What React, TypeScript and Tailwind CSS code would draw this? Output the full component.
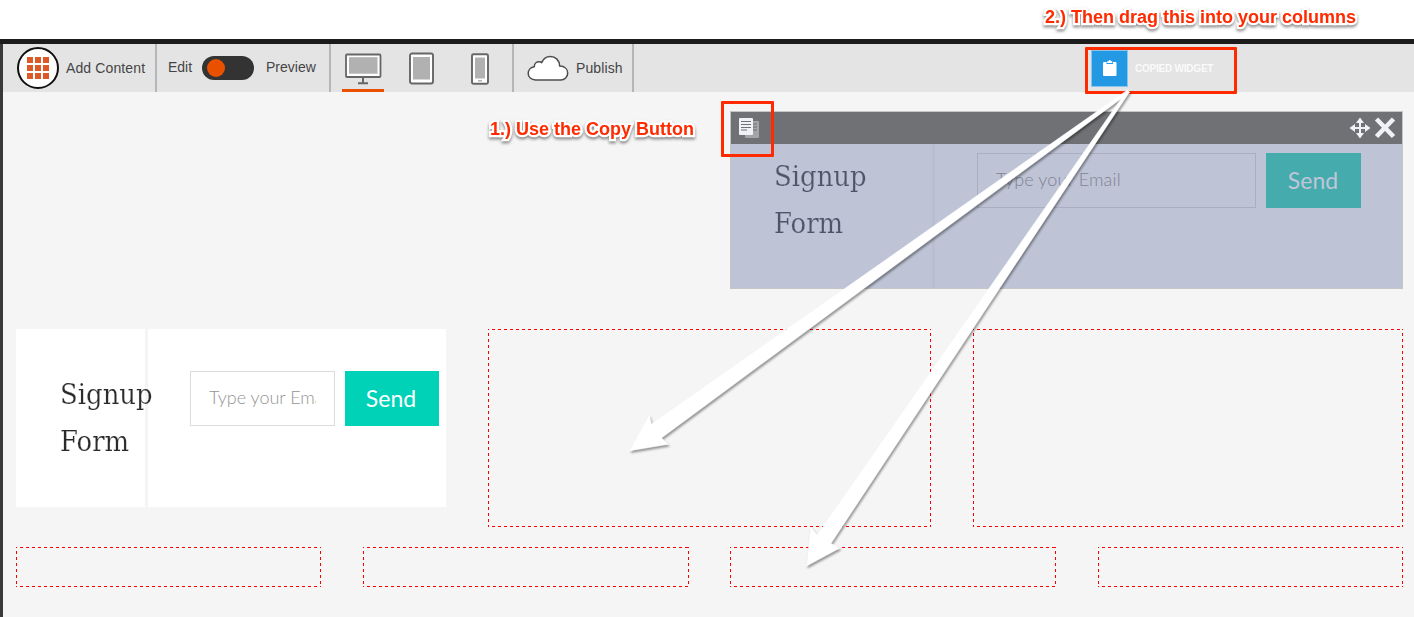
import type { ReactNode } from "react";

const sans = "font-['Liberation_Sans',sans-serif]";

function Monitor() {
  return (
    <svg width="38" height="34" viewBox="0 0 38 34" className="block">
      <rect x="2" y="2.500" width="34.500" height="22.500" rx="1" fill="#fff" stroke="#666" strokeWidth="1.800" />
      <rect x="5" y="5.200" width="28.500" height="16.500" fill="#b1b1b1" />
      <path d="M19 25v6M14 31.300h10" stroke="#666" strokeWidth="2" fill="none" />
    </svg>
  );
}

function Tablet() {
  return (
    <svg width="26" height="34" viewBox="0 0 26 34" className="block">
      <rect x="1" y="1.500" width="23" height="30" rx="2" fill="#fff" stroke="#666" strokeWidth="1.900" />
      <rect x="4" y="5" width="17" height="22.500" fill="#b1b1b1" />
    </svg>
  );
}

function Phone() {
  return (
    <svg width="19" height="34" viewBox="0 0 19 34" className="block">
      <rect x="1" y="2.200" width="16" height="29.500" rx="1.500" fill="#fff" stroke="#666" strokeWidth="1.900" />
      <rect x="4" y="5.500" width="10" height="21" fill="#b1b1b1" />
      <rect x="7" y="28" width="4" height="1.500" fill="#b1b1b1" />
    </svg>
  );
}

function Cloud() {
  return (
    <svg width="42" height="27" viewBox="0 0 42 27" className="block">
      <path
        d="M8.500 25C4.200 25 1.200 22 1.200 18.400C1.200 15 3.700 12.200 7.300 11.700C7.300 8.500 9.600 6.800 12 6.800C13.100 6.800 13.900 7 14.700 7.600C16.200 3.800 19.400 1.500 23.300 1.500C28.600 1.500 32.500 5.300 32.700 11.100C37.800 11.200 40.700 14.300 40.700 18.100C40.700 22 37.700 25 33.700 25Z"
        fill="#fff"
        stroke="#4d4d4d"
        strokeWidth="1.500"
        strokeLinejoin="round"
      />
    </svg>
  );
}

function Toolbar() {
  return (
    <header className={`flex h-12 bg-[#e4e4e4] text-[14px] leading-none text-[#444] ${sans}`}>
      <div className="flex w-[154px] items-center border-r-2 border-[#b4b7ba] pl-3.5">
        <div className="grid h-[42px] w-[42px] shrink-0 place-content-center grid-cols-[repeat(3,6px)] gap-0.5 rounded-full border-2 border-[#111] bg-white">
          {Array.from({ length: 9 }, (_, i) => (
            <span key={i} className="h-1.5 w-1.5 bg-[#dc5a28]" />
          ))}
        </div>
        <span className="ml-[7px] whitespace-nowrap tracking-[0.12px]">Add Content</span>
      </div>
      <div className="flex w-[174px] items-center border-r-2 border-[#b4b7ba] pl-[11px]">
        <span className="w-[34px] -mt-0.5">Edit</span>
        <span className="flex h-6 w-[52px] items-center rounded-full bg-[#333] pl-[5px]">
          <span className="h-[18px] w-[18px] rounded-full bg-[#e95000]" />
        </span>
        <span className="ml-3 -mt-0.5">Preview</span>
      </div>
      <div className="flex w-[183px] border-r-2 border-[#b4b7ba] pl-[11px]">
        <div className="flex h-12 w-[42px] flex-col items-center border-b-3 border-[#e95000] pt-2">
          <Monitor />
        </div>
        <div className="ml-[25px] pt-2">
          <Tablet />
        </div>
        <div className="ml-9 pt-2">
          <Phone />
        </div>
      </div>
      <div className="flex w-[120px] items-center border-r-2 border-[#b4b7ba] pl-[13px]">
        <Cloud />
        <span className="ml-[7px] tracking-[0.1px]">Publish</span>
      </div>
      <div className="ml-[457px] mt-1.5 flex h-[37px] items-center">
        <span className="grid h-[37px] w-[37px] place-content-center border border-[#8bc5ec] bg-[#2499e3]">
          <svg width="16" height="18" viewBox="0 0 16 18" className="-mt-0.5 block">
            <path d="M2 3h2.500v2h6.500V3H13.500q1 0 1 1v12q0 1-1 1H2q-1 0-1-1V4q0-1 1-1Z" fill="#fff" />
            <path d="M5.200 2.200H6.700a1.100 1.100 0 0 1 2.200 0h1.400V4h-5.100Z" fill="#fff" />
          </svg>
        </span>
        <span className="ml-[7px] whitespace-nowrap text-[10px] font-bold tracking-[-0.22px] text-[#fafafa]">COPIED WIDGET</span>
      </div>
    </header>
  );
}

function Title({ dim }: { dim?: boolean }) {
  return (
    <h2
      className={`-ml-px origin-left scale-x-[0.96] font-['DejaVu_Serif',serif] text-[27px] leading-[47px] ${
        dim
          ? "text-[#4d5567] [-webkit-text-stroke:0.2px_#bec4d6]"
          : "text-[#2b2b2e] [-webkit-text-stroke:0.2px_#fff]"
      }`}
    >
      Signup
      <br />
      Form
    </h2>
  );
}

function CopiedSource() {
  return (
    <section className="ml-auto h-[178px] w-[673px] border border-[#c4c5c8] bg-[#bec4d6]">
      <div className="flex h-8 items-center bg-[#707175]">
        <svg width="22" height="22" viewBox="0 0 22 22" className="ml-[7px]">
          <rect x="7" y="4" width="14" height="17" rx="1" fill="#a3a4a8" />
          <path d="M14 7h5M14 10h5M14 13h5" stroke="#707175" strokeWidth="1.200" />
          <rect x="1" y="1" width="14" height="17" rx="1" fill="#f0f1f6" />
          <path d="M3 4.500h10M3 7.500h10M3 10.500h10M3 13h6" stroke="#707175" strokeWidth="1.200" />
        </svg>
        <svg width="22" height="22" viewBox="0 0 22 22" className="ml-auto" fill="#f0f1f6">
          <path d="M11 0.500l4 5.500H12v4h4V7L21.500 11l-5.500 4v-3h-4v4h3L11 21.500l-4-5.500h3v-4H6v3L0.500 11l5.500-4v3h4V6H7Z" />
        </svg>
        <svg width="22" height="22" viewBox="0 0 22 22" className="ml-[3px] mr-1.5">
          <path d="M2.500 2l17 17.500M19.500 2l-17 17.500" stroke="#f0f1f6" strokeWidth="4.600" />
        </svg>
      </div>
      <div className="flex h-36">
        <div className="w-[204px] border-r-3 border-[#b9bfd1] pl-11 pt-[9px]">
          <Title dim />
        </div>
        <div className="flex pl-[42px] pt-[9px] font-[Lato,sans-serif]">
          <div className="h-[55px] w-[279px] border border-[#a9aec0] pl-[18px] text-[18px] font-light leading-[51px] tracking-[0.15px] text-[#7f8394]">
            Type your Email
          </div>
          <div className="ml-2.5 h-[55px] w-[95px] bg-[#45abad] pr-px text-center text-[23px] leading-[55px] text-[#c0c5d8]">
            Send
          </div>
        </div>
      </div>
    </section>
  );
}

function PastedWidget() {
  return (
    <section className="flex h-[178px] w-[430px] bg-white">
      <div className="w-[132px] shrink-0 border-r-3 border-[#f5f5f5] pl-[45px] pt-[42px]">
        <Title />
      </div>
      <div className="flex pl-[42px] pt-[42px] font-[Lato,sans-serif]">
        <div className="h-[55px] w-[145px] border border-[#dcdcdc] px-[18px] text-[18px] font-light leading-[51px] text-[#949494]">
          <div className="overflow-hidden whitespace-nowrap">Type your Email</div>
        </div>
        <div className="ml-2.5 h-[55px] w-[94px] bg-[#00d2b8] pr-0.5 text-center text-[23px] leading-[55px] text-white">
          Send
        </div>
      </div>
    </section>
  );
}

function DropZone({ className }: { className: string }) {
  return (
    <div className={className}>
      <svg width="100%" height="100%" className="block" fill="none" stroke="#f00" strokeDasharray="3 3" shapeRendering="crispEdges">
        <line x1="0" y1="0.5" x2="100%" y2="0.5" strokeDashoffset="2" />
        <line x1="0" y1="100%" x2="100%" y2="100%" strokeDashoffset="2" strokeWidth="2" />
        <line x1="0.5" y1="0" x2="0.5" y2="100%" strokeDashoffset="2" />
        <line x1="100%" y1="0" x2="100%" y2="100%" strokeDashoffset="2" strokeWidth="2" />
      </svg>
    </div>
  );
}

function Callout({ className, children }: { className: string; children: ReactNode }) {
  return (
    <p
      className={`absolute whitespace-nowrap text-[18px] font-bold leading-5 text-[#ff2a00] [paint-order:stroke_fill] [-webkit-text-stroke:4.5px_#fff] [filter:drop-shadow(0_2px_1.5px_rgba(0,0,0,0.45))] ${sans} ${className}`}
    >
      {children}
    </p>
  );
}

export default function App() {
  return (
    <div className="relative h-[617px] w-[1414px] overflow-hidden bg-white pt-[39px]">
      <div className="h-[5px] bg-[#1c1c1c]" />
      <div className="h-[573px] border-l-3 border-[#393939] bg-[#f5f5f5]">
        <Toolbar />
        <main className="pl-[13px] pr-[11px] pt-[19px]">
          <CopiedSource />
          <div className="mt-10 flex">
            <PastedWidget />
            <DropZone className="ml-[42px] h-[198px] w-[443px]" />
            <DropZone className="ml-[42px] h-[198px] w-[430px]" />
          </div>
          <div className="mt-5 flex">
            <DropZone className="h-10 w-[305px]" />
            <DropZone className="ml-[42px] h-10 w-[326px]" />
            <DropZone className="ml-[41px] h-10 w-[326px]" />
            <DropZone className="ml-[42px] h-10 w-[305px]" />
          </div>
        </main>
      </div>

      <div className="absolute left-[1085px] top-[47px] h-[47px] w-[152px] rounded-[1px] border-3 border-[#ff2a00]" />
      <div className="absolute left-[721px] top-[101px] h-14 w-[53px] rounded-[1px] border-3 border-[#ff2a00]" />
      <svg width="1414" height="617" className="pointer-events-none absolute left-0 top-0 [filter:drop-shadow(1px_2px_1px_rgba(0,0,0,0.4))]">
        <g fill="#fff" stroke="#fff" strokeWidth="0.500" strokeLinejoin="round">
          <path d="M1127.500 90L1129.500 92.500L661.500 438L668.500 444.300L630 450.700L649.300 415.300L651.500 424.300Z" />
          <path d="M1126.500 91L1129.500 92L831 543.500L840 548L806.700 566L810.700 527.300L817.300 535Z" />
        </g>
      </svg>
      <Callout className="left-[490px] top-[119px]">1.) Use the Copy Button</Callout>
      <Callout className="left-[1045px] top-[7px]">2.) Then drag this into your columns</Callout>
    </div>
  );
}
